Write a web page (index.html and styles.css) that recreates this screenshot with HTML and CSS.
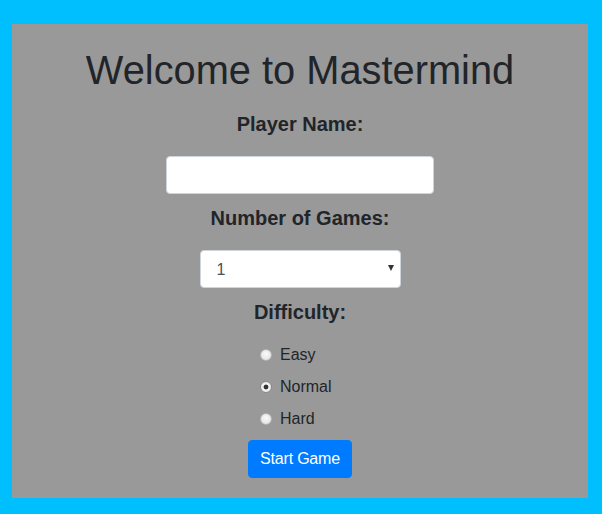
FILE: index.html
```html
<!DOCTYPE html>
<html lang="en">
<head>
<meta charset="utf-8">
<title>Mastermind</title>
<link rel="stylesheet" href="styles.css">
</head>
<body>
<main class="panel">
  <h1 class="title">Welcome to Mastermind</h1>
  <label class="field-label" for="player">Player Name:</label>
  <input class="text-input" id="player" type="text">
  <label class="field-label" for="games">Number of Games:</label>
  <div class="select-wrap">
    <select class="select-input" id="games">
      <option>1</option>
      <option>2</option>
      <option>3</option>
    </select>
  </div>
  <div class="field-label">Difficulty:</div>
  <div class="radio-group">
    <label class="radio-row"><input class="radio" type="radio" name="diff"> Easy</label>
    <label class="radio-row"><input class="radio" type="radio" name="diff" checked> Normal</label>
    <label class="radio-row"><input class="radio" type="radio" name="diff"> Hard</label>
  </div>
  <button class="start-btn" type="button">Start Game</button>
</main>
</body>
</html>
```

FILE: styles.css
```css
* { box-sizing: border-box; }

html, body {
  margin: 0;
  height: 100%;
}

body {
  background: #00bfff;
  padding: 24px 14px 16px 12px;
  font-family: "Liberation Sans", Arial, sans-serif;
  color: #212529;
}

.panel {
  background: #999999;
  height: 474px;
  display: flex;
  flex-direction: column;
  align-items: center;
  padding-top: 22px;
}

.title {
  margin: 0;
  font-size: 39.8px;
  line-height: 48px;
  font-weight: 400;
}

.field-label {
  display: block;
  font-size: 20px;
  line-height: 24px;
  font-weight: 700;
  margin-bottom: 20px;
}

.title + .field-label { margin-top: 18px; }

.text-input {
  width: 268px;
  height: 38px;
  border: 1px solid #ced4da;
  border-radius: 4px;
  background: #fff;
  margin: 0 0 12px;
  padding: 6px 12px;
  font: 16px "Liberation Sans", Arial, sans-serif;
  color: #495057;
}

.select-wrap {
  position: relative;
  width: 201px;
  margin-bottom: 12px;
}

.select-wrap::after {
  content: "";
  position: absolute;
  right: 7px;
  top: 15px;
  border-left: 3px solid transparent;
  border-right: 3px solid transparent;
  border-top: 6px solid #333;
  pointer-events: none;
}

.select-input {
  appearance: none;
  -webkit-appearance: none;
  display: block;
  width: 100%;
  height: 38px;
  border: 1px solid #ced4da;
  border-radius: 4px;
  background: #fff;
  padding: 6px 12px 6px 16px;
  font: 16px "Liberation Sans", Arial, sans-serif;
  color: #495057;
}

.radio-group {
  width: 80px;
  display: flex;
  flex-direction: column;
  gap: 8px;
  margin-top: -1px;
}

.radio-row {
  display: flex;
  align-items: center;
  gap: 8px;
  font-size: 16px;
  line-height: 24px;
  color: #212529;
}

.radio {
  appearance: none;
  -webkit-appearance: none;
  margin: 0;
  width: 12px;
  height: 12px;
  border-radius: 50%;
  border: 1px solid #b4b4b4;
  background: radial-gradient(circle at 50% 40%, #fafafa 0, #e6e6e6 70%, #d4d4d4 100%);
}

.radio:checked {
  border-color: #8a8a8a;
  background: radial-gradient(circle, #333 0 2px, #f4f4f4 2.8px, #e0e0e0 100%);
}

.start-btn {
  margin-top: 9px;
  height: 38px;
  padding: 6px 11px;
  border: 1px solid #007bff;
  border-radius: 4px;
  background: #007bff;
  color: #fff;
  font: 16px/24px "Liberation Sans", Arial, sans-serif;
  letter-spacing: -0.2px;
}
```
